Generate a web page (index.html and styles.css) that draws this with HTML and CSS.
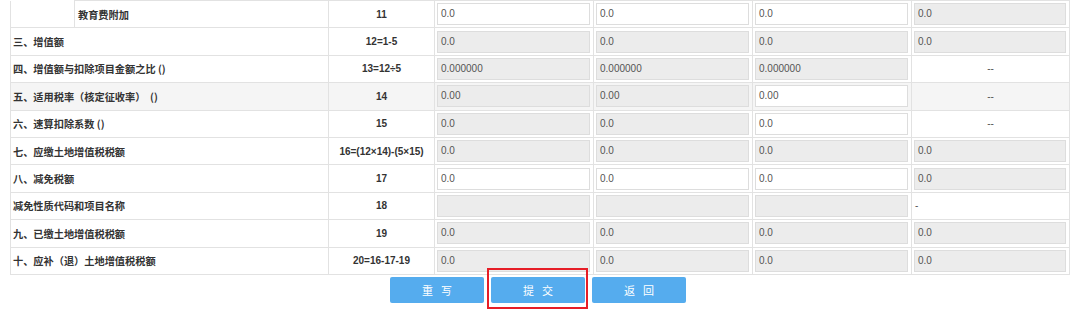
FILE: index.html
```html
<!DOCTYPE html>
<html lang="zh-CN">
<head>
<meta charset="utf-8">
<title>土地增值税申报</title>
<link rel="stylesheet" href="styles.css">
</head>
<body>
<div class="page">
  <table class="grid">
    <colgroup>
      <col class="c-indent"><col class="c-label"><col class="c-num">
      <col class="c-val"><col class="c-val"><col class="c-val"><col class="c-val4">
    </colgroup>
    <tbody>
      <tr>
        <td class="indent"></td>
        <td class="label">教育费附加</td>
        <td class="num">11</td>
        <td class="val"><div class="box edit">0.0</div></td>
        <td class="val"><div class="box edit">0.0</div></td>
        <td class="val"><div class="box edit">0.0</div></td>
        <td class="val"><div class="box ro">0.0</div></td>
      </tr>
      <tr>
        <td class="label" colspan="2">三、增值额</td>
        <td class="num">12=1-5</td>
        <td class="val"><div class="box ro">0.0</div></td>
        <td class="val"><div class="box ro">0.0</div></td>
        <td class="val"><div class="box ro">0.0</div></td>
        <td class="val"><div class="box ro">0.0</div></td>
      </tr>
      <tr>
        <td class="label" colspan="2">四、增值额与扣除项目金额之比 ()</td>
        <td class="num">13=12÷5</td>
        <td class="val"><div class="box ro">0.000000</div></td>
        <td class="val"><div class="box ro">0.000000</div></td>
        <td class="val"><div class="box ro">0.000000</div></td>
        <td class="dash">--</td>
      </tr>
      <tr class="hover">
        <td class="label" colspan="2">五、适用税率（核定征收率）&nbsp; ()</td>
        <td class="num">14</td>
        <td class="val"><div class="box ro">0.00</div></td>
        <td class="val"><div class="box ro">0.00</div></td>
        <td class="val"><div class="box edit">0.00</div></td>
        <td class="dash">--</td>
      </tr>
      <tr>
        <td class="label" colspan="2">六、速算扣除系数 ()</td>
        <td class="num">15</td>
        <td class="val"><div class="box ro">0.0</div></td>
        <td class="val"><div class="box ro">0.0</div></td>
        <td class="val"><div class="box edit">0.0</div></td>
        <td class="dash">--</td>
      </tr>
      <tr>
        <td class="label" colspan="2">七、应缴土地增值税税额</td>
        <td class="num">16=(12×14)-(5×15)</td>
        <td class="val"><div class="box ro">0.0</div></td>
        <td class="val"><div class="box ro">0.0</div></td>
        <td class="val"><div class="box ro">0.0</div></td>
        <td class="val"><div class="box ro">0.0</div></td>
      </tr>
      <tr>
        <td class="label" colspan="2">八、减免税额</td>
        <td class="num">17</td>
        <td class="val"><div class="box edit">0.0</div></td>
        <td class="val"><div class="box edit">0.0</div></td>
        <td class="val"><div class="box edit">0.0</div></td>
        <td class="val"><div class="box ro">0.0</div></td>
      </tr>
      <tr>
        <td class="label" colspan="2">减免性质代码和项目名称</td>
        <td class="num">18</td>
        <td class="val"><div class="box ro"></div></td>
        <td class="val"><div class="box ro"></div></td>
        <td class="val"><div class="box ro"></div></td>
        <td class="plain">-</td>
      </tr>
      <tr>
        <td class="label" colspan="2">九、已缴土地增值税税额</td>
        <td class="num">19</td>
        <td class="val"><div class="box ro">0.0</div></td>
        <td class="val"><div class="box ro">0.0</div></td>
        <td class="val"><div class="box ro">0.0</div></td>
        <td class="val"><div class="box ro">0.0</div></td>
      </tr>
      <tr>
        <td class="label" colspan="2">十、应补（退）土地增值税税额</td>
        <td class="num">20=16-17-19</td>
        <td class="val"><div class="box ro">0.0</div></td>
        <td class="val"><div class="box ro">0.0</div></td>
        <td class="val"><div class="box ro">0.0</div></td>
        <td class="val"><div class="box ro">0.0</div></td>
      </tr>
    </tbody>
  </table>
  <div class="actions">
    <button class="btn">重写</button>
    <span class="mark"><button class="btn">提交</button></span>
    <button class="btn">返回</button>
  </div>
</div>
</body>
</html>
```
FILE: styles.css
```css
html, body {
  margin: 0;
  padding: 0;
  background: #ffffff;
}
body {
  font-family: "Liberation Sans", "Noto Sans CJK SC", sans-serif;
  font-size: 10px;
  color: #333333;
}
.page {
  padding: 0 11px 23px 10px;
}
.grid {
  border-collapse: collapse;
  table-layout: fixed;
  width: 1059px;
}
.c-indent { width: 64px; }
.c-label { width: 254px; }
.c-num { width: 106px; }
.c-val { width: 159px; }
.c-val4 { width: 158px; }
.grid tr {
  height: 27.4px;
}
.grid td {
  border: 1px solid #e2e2e2;
  padding: 0;
  vertical-align: middle;
  white-space: nowrap;
  overflow: hidden;
}
.grid tr:first-child td.indent {
  border-top: none;
}
.label {
  font-family: "Noto Sans CJK SC", "Liberation Sans", sans-serif;
  font-weight: 700;
  font-size: 10.2px;
  color: #333333;
  padding-left: 2px !important;
}
.indent + .label {
  padding-left: 3px !important;
}
.num {
  text-align: center;
  font-weight: 700;
  color: #333333;
}
.val {
  padding: 0 3px 0 2px !important;
}
.box {
  box-sizing: border-box;
  height: 22px;
  line-height: 20px;
  padding-left: 3px;
  border: 1px solid #dddddd;
  color: #555555;
  font-size: 10px;
}
.box.edit {
  background: #ffffff;
}
.box.ro {
  background: #ececec;
}
.dash {
  text-align: center;
  color: #555555;
}
.plain {
  padding-left: 3px !important;
  color: #555555;
}
.hover td {
  background: #f5f5f5;
}
.actions {
  display: flex;
  align-items: flex-start;
  justify-content: center;
  gap: 7px;
  margin-top: 2px;
  padding-right: 3px;
}
.btn {
  display: block;
  width: 94px;
  height: 26px;
  border: none;
  border-radius: 2px;
  background: #55acee;
  color: #ffffff;
  font-family: "Noto Sans CJK SC", sans-serif;
  font-size: 11px;
  letter-spacing: 8px;
  text-indent: 8px;
  padding: 0;
  margin: 0;
}
.mark {
  position: relative;
  display: block;
  height: 26px;
}
.mark::after {
  content: "";
  position: absolute;
  left: -4px;
  right: -3px;
  top: -9px;
  bottom: -6px;
  border: 2px solid #e61e27;
  pointer-events: none;
}
```
